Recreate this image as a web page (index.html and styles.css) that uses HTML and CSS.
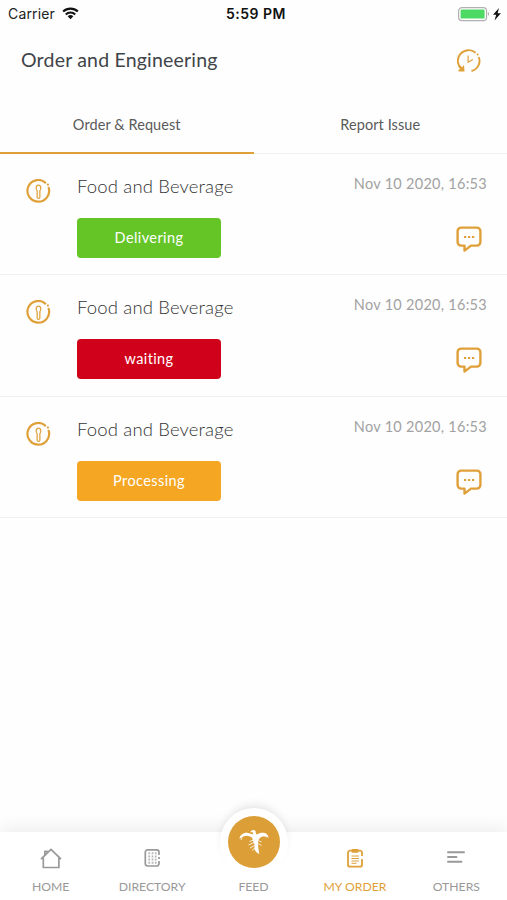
FILE: index.html
```
<!DOCTYPE html>
<html lang="en">

<head>
    <meta charset="utf-8">
    <meta name="viewport" content="width=device-width, initial-scale=1.0">
    <title>Order and Engineering</title>
    <link rel="stylesheet" href="styles.css">
</head>

<body>
    <!-- shared icons -->
    <svg class="sprite">
        <symbol id="spoon" viewBox="0 0 24 24">
            <path d="M18.5 3.4A10.4 10.4 0 1 0 21.800 8.500" fill="none" stroke="currentColor" stroke-width="2.100" stroke-linecap="round" />
            <circle cx="21" cy="5.300" r="1.100" fill="currentColor" />
            <path d="M12 5.800c-2.700 0-2.700 4.200-1.300 5.400v6.300c0 1.500 2.600 1.500 2.600 0v-6.300c1.400-1.200 1.400-5.400-1.300-5.400z" fill="none" stroke="currentColor" stroke-width="1.200" />
        </symbol>
        <symbol id="chat" viewBox="0 0 26 26">
            <path d="M5.2 1.600h15.600a3.600 3.600 0 0 1 3.600 3.600v10.800a3.600 3.600 0 0 1-3.600 3.600H15l-6.500 5v-5H5.200a3.600 3.600 0 0 1-3.600-3.600V5.200a3.600 3.600 0 0 1 3.600-3.600z" fill="none" stroke="currentColor" stroke-width="2.400" stroke-linejoin="round" />
            <path d="M8 11h2.200M12 11h2.200M16 11h2.200" stroke="currentColor" stroke-width="2" />
        </symbol>
    </svg>

    <div class="statusbar">
        <div class="carrier">
            <span>Carrier</span>
            <svg class="wifi" viewBox="0 0 18 13">
                <path d="M1.2 4.5a11.2 11.2 0 0 1 15.6 0M4 7.5a7.2 7.2 0 0 1 10 0" fill="none" stroke="#111" stroke-width="2.2" />
                <path d="M6 9.5a4.3 4.3 0 0 1 6 0l-3 3z" fill="#111" />
            </svg>
        </div>
        <div class="clock">5:59 PM</div>
        <div class="power">
            <svg viewBox="0 0 46 16">
                <rect x=".600" y="1.600" width="28" height="13" rx="3.400" fill="#fff" stroke="#b0b0b0" stroke-width="1.200" />
                <rect x="2.600" y="3.600" width="24" height="9" rx="1.200" fill="#4cd964" />
                <path d="M30 5.800q2 2.200 0 4.400z" fill="#aaa" />
                <path d="M41 2l-6 6.800h3.200l-1.700 5.600 6.400-7.200h-3.300z" fill="#111" />
            </svg>
        </div>
    </div>

    <div class="header">
        <h1>Order and Engineering</h1>
        <svg class="history" viewBox="0 0 24 24">
            <path d="M4.500 20A10.300 10.300 0 0 1 18.600 3.800M21.700 8A10.300 10.300 0 0 1 14.500 22" fill="none" stroke="currentColor" stroke-width="1.900" />
            <circle cx="20.600" cy="5.500" r="1" fill="currentColor" />
            <path d="M1.500 16.500h2l1.500 2 2-2.500.5 6.500H1.500v-1.800l2-.7z" fill="currentColor" />
            <path d="M11.100 6.500v6.800l4.800-2.800" fill="none" stroke="currentColor" stroke-width="1.200" />
        </svg>
    </div>

    <div class="tabs">
        <div class="tab active">Order &amp; Request</div>
        <div class="tab">Report Issue</div>
    </div>

    <div class="orders">
        <div class="order">
            <svg class="type"><use href="#spoon" /></svg>
            <div class="info">
                <h2>Food and Beverage</h2>
                <div class="status delivering">Delivering</div>
            </div>
            <div class="side">
                <span class="date">Nov 10 2020, 16:53</span>
                <svg class="chat"><use href="#chat" /></svg>
            </div>
        </div>
        <div class="order">
            <svg class="type"><use href="#spoon" /></svg>
            <div class="info">
                <h2>Food and Beverage</h2>
                <div class="status waiting">waiting</div>
            </div>
            <div class="side">
                <span class="date">Nov 10 2020, 16:53</span>
                <svg class="chat"><use href="#chat" /></svg>
            </div>
        </div>
        <div class="order">
            <svg class="type"><use href="#spoon" /></svg>
            <div class="info">
                <h2>Food and Beverage</h2>
                <div class="status processing">Processing</div>
            </div>
            <div class="side">
                <span class="date">Nov 10 2020, 16:53</span>
                <svg class="chat"><use href="#chat" /></svg>
            </div>
        </div>
    </div>

    <div class="navbar">
        <div class="navitem">
            <svg viewBox="0 0 22 22">
                <path d="M1 12.200L11 2.300l10 9.900M3.300 10.800v9.700h15.600v-9.700M4.800 8V4.400h2.400v1.500" fill="none" stroke="currentColor" stroke-width="1.700" stroke-linejoin="round" />
            </svg>
            <span>HOME</span>
        </div>
        <div class="navitem">
            <svg viewBox="0 0 22 22">
                <path d="M18 8V5.200a2.400 2.400 0 0 0-2.400-2.400H6.700a2.400 2.400 0 0 0-2.400 2.400v11.400A2.400 2.400 0 0 0 6.700 19h8.900a2.400 2.400 0 0 0 2.400-2.400V14M18 10v2" fill="none" stroke="currentColor" stroke-width="1.700" />
                <path d="M8.200 5.200v12M11.500 5.200v12M14.700 5.200v12" stroke="currentColor" stroke-width="1.700" stroke-dasharray="2 1.200" opacity=".7" />
            </svg>
            <span>DIRECTORY</span>
        </div>
        <div class="navitem">
            <div class="feed">
                <svg viewBox="0 0 52 52">
                    <path d="M11.500 23c.5-5 5.500-7.500 10.500-5.500 1.500.6 2.400 1 3.200.5l-.8-2-2 .2c.4-2.200 3.800-3.200 5-1.300.7 1.200.2 2.600.8 3.300 1 .6 2-.7 4-1.200 4.500-1.200 8.300 1 8.300 5-1.800-2-5-2.500-7.300-1-2 1.300-3 3-3.200 5.500-.2 4 .7 6.500 1.200 11.500-3.700-1.700-5.200-4-4.700-7.500.3-2.500-1-3.500-1.500-5.500-.4-2.200-.5-3.500-3-4.500-3.500-1.400-7-.5-10.500 2.500z" fill="#fff" />
                    <path d="M25.500 24l-4 1.500M26 26.500l-5.500 2.500M26.500 29.500l-4.500 2.500M27 32l-3 2.500M30 24.500l3.500 1.500M30 27.500l3.500 2M15 19l-2 5M35 18l3 3.500" fill="none" stroke="#fff" stroke-width=".8" />
                </svg>
            </div>
            <span>FEED</span>
        </div>
        <div class="navitem current">
            <svg viewBox="0 0 22 22">
                <path d="M18 9V5.700a2 2 0 0 0-2-2H6a2 2 0 0 0-2 2v12a2 2 0 0 0 2 2h10a2 2 0 0 0 2-2V12" fill="none" stroke="currentColor" stroke-width="1.800" />
                <rect x="7.500" y="2" width="7" height="3.700" rx="1" fill="currentColor" />
                <path d="M7.500 9h7.500M7.500 11.500h7.500M7.500 14h7.500M7.500 16.300h5" stroke="currentColor" stroke-width="1" />
            </svg>
            <span>MY ORDER</span>
        </div>
        <div class="navitem">
            <svg viewBox="0 0 22 22">
                <path d="M3 5.300h16M3 10h8.500M3 14.700h13.500" stroke="currentColor" stroke-width="1.900" stroke-linecap="round" />
            </svg>
            <span>OTHERS</span>
        </div>
    </div>
</body>

</html>
```
FILE: styles.css
```
:root {
    --gold: #dfa03a;
    --line: #f0f0f0;
    font-family: Lato, sans-serif;
}

* {
    box-sizing: border-box;
}

body {
    margin: 0;
    height: 900px;
    display: flex;
    flex-direction: column;
    background-color: #fefefe;
    overflow: hidden;
}

h1,
h2 {
    margin: 0;
    font-weight: 400;
}

.sprite {
    display: none;
}

.statusbar {
    display: grid;
    grid-template-columns: 1fr auto 1fr;
    align-items: center;
    height: 27px;
    padding: 0 3px 0 8px;
    font-family: Inter, sans-serif;
    font-size: 14px;
    color: #222;
}

.carrier {
    display: flex;
    align-items: center;
    gap: 7px;
    letter-spacing: 0.15px;
}

.wifi {
    width: 17px;
    height: 13px;
}

.clock {
    font-weight: 600;
    letter-spacing: 0.5px;
    color: #111;
}

.power {
    display: flex;
    justify-content: flex-end;
}

.power svg {
    width: 46px;
    height: 16px;
}

.header {
    display: flex;
    justify-content: space-between;
    align-items: center;
    height: 67px;
    padding: 0 26px 0 21px;
}

.header h1 {
    padding-bottom: 2px;
    font-size: 19.5px;
    letter-spacing: 0.2px;
    color: #414448;
}

.history {
    width: 24px;
    height: 24px;
    color: var(--gold);
}

.tabs {
    display: flex;
    height: 60px;
}

.tab {
    flex: 1;
    padding-top: 22px;
    line-height: 18px;
    text-align: center;
    font-size: 14.5px;
    letter-spacing: 0.08px;
    color: #5a5a5a;
    border-bottom: 1px solid var(--line);
}

.tab.active {
    border-bottom: 2.5px solid var(--gold);
}

.order {
    display: flex;
    height: 121.3px;
    padding: 20px 20px 0 26px;
    border-bottom: 1.4px solid var(--line);
}

.type {
    width: 25px;
    height: 25px;
    margin-top: 5px;
    color: var(--gold);
}

.info {
    margin-left: 26px;
}

.info h2 {
    height: 44px;
    line-height: 24px;
    font-size: 18.5px;
    font-weight: 300;
    letter-spacing: 0.15px;
    color: #333;
}

.status {
    width: 144px;
    height: 40px;
    line-height: 40px;
    border-radius: 4px;
    text-align: center;
    font-size: 14.5px;
    letter-spacing: 0.4px;
    color: #fff;
}

.delivering {
    background-color: #65c527;
}

.waiting {
    background-color: #d0021b;
}

.processing {
    background-color: #f5a623;
}

.side {
    margin-left: auto;
    display: flex;
    flex-direction: column;
    align-items: flex-end;
}

.date {
    height: 52px;
    line-height: 19px;
    font-size: 14.5px;
    letter-spacing: 0.28px;
    color: #a2a2a2;
}

.chat {
    width: 26px;
    height: 26px;
    margin-right: 5px;
    color: var(--gold);
}

.navbar {
    display: flex;
    height: 68px;
    margin-top: auto;
    background-color: #fff;
    box-shadow: 0 -4px 16px rgba(0, 0, 0, 0.07);
}

.navitem {
    flex: 1;
    display: flex;
    flex-direction: column;
    align-items: center;
    justify-content: flex-end;
    gap: 10px;
    padding-bottom: 5px;
    line-height: 16px;
    font-size: 12.2px;
    color: #999;
}

.navitem > svg {
    width: 22px;
    height: 22px;
}

.navitem.current {
    color: var(--gold);
}

/* round button that sticks out of the bar */
.feed {
    flex: none;
    width: 68px;
    height: 68px;
    margin-bottom: -7px;
    padding: 8px;
    border-radius: 50%;
    background-color: #fff;
    box-shadow: 0 -5px 10px -3px rgba(0, 0, 0, 0.12);
}

.feed svg {
    display: block;
    width: 52px;
    height: 52px;
    border-radius: 50%;
    background-color: #dc9f38;
}
```
